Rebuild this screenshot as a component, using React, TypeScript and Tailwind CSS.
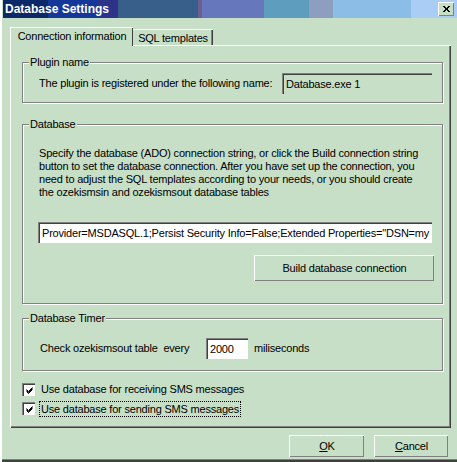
import React from "react";

function Group({ title, className, children }: { title: string; className: string; children: React.ReactNode }) {
  return (
    <fieldset className={"w-[421px] border border-[#808080] shadow-[1px_1px_0_#ffffff,inset_1px_1px_0_#ffffff] " + className}>
      <legend className="ml-[6px] px-[1px] bg-[#c7dfc7] leading-[13px]">{title}</legend>
      {children}
    </fieldset>
  );
}

function Check() {
  return (
    <span className="w-[13px] h-[13px] bg-white border-t border-l border-[#808080] border-r-white border-b-white shadow-[inset_1px_1px_0_#404040] flex items-center justify-center shrink-0">
      <svg width="7" height="7" viewBox="0 0 7 7" className="block">
        <path d="M0.5 2.5 L2.5 4.5 L6.5 0.5 M0.5 3.5 L2.5 5.5 L6.5 1.5 M0.5 4.5 L2.5 6.5 L6.5 2.5" stroke="#000" strokeWidth="1" fill="none" />
      </svg>
    </span>
  );
}

export default function App() {
  return (
    <div className="w-[457px] h-[462px] bg-[#c7dfc7] font-['Liberation_Sans',Arial,sans-serif] text-[11px] tracking-[-0.2px] text-black overflow-hidden flex flex-col pl-[3px] shadow-[inset_2px_0_0_#ffffff,inset_0_-2px_0_#404040,inset_0_-3px_0_#808080]">
      {/* title bar */}
      <div className="h-[18px] flex items-center justify-between pl-[2px] pr-[3px] bg-[linear-gradient(90deg,#0b2868_0px,#0b2868_45px,#14389a_45px,#14389a_94px,#2c3388_94px,#2c3388_115px,#375f89_115px,#375f89_195px,#6a6090_195px,#6a6090_199px,#6677bb_199px,#6677bb_261px,#5f9dbf_261px,#5f9dbf_306px,#8e9ebe_306px,#8e9ebe_330px,#8bbde6_330px,#8bbde6_408px,#aacdf5_408px)]">
        <span className="text-white font-bold text-[12px] tracking-normal leading-[18px]">Database Settings</span>
        <span className="w-[16px] h-[14px] bg-[#c7dfc7] border-t border-l border-white border-r-[#404040] border-b-[#404040] shadow-[inset_-1px_-1px_0_#808080] flex items-center justify-center">
          <svg width="8" height="7" viewBox="0 0 8 7" className="block">
            <path d="M0 0 L6 6 M1 0 L7 6 M6 0 L0 6 M7 0 L1 6" stroke="#000" strokeWidth="1" shapeRendering="crispEdges" />
          </svg>
        </span>
      </div>

      <div className="pt-[9px] pl-[7px]">
        {/* tabs */}
        <div className="flex items-end h-[18px]">
          <div className="relative z-10 w-[123px] h-[19px] -mb-[1px] bg-[#c7dfc7] border-t border-l border-white shadow-[inset_-1px_0_0_#404040] flex items-start justify-center pt-[2px] leading-[13px]">
            Connection information
          </div>
          <div className="w-[80px] h-[16px] border-t border-white shadow-[inset_-1px_0_0_#404040,inset_-2px_0_0_#808080] flex items-start justify-center pt-[2px] leading-[13px]">
            SQL templates
          </div>
        </div>

        {/* panel */}
        <div className="w-[441px] h-[383px] border-t border-l border-white shadow-[inset_-1px_-1px_0_#404040,inset_-2px_-2px_0_#808080] pl-[11px] pt-[10px]">
          <Group title="Plugin name" className="">
            <div className="flex items-center pt-[4px] pb-[8px] pl-[16px] pr-[10px]">
              <span>The plugin is registered under the following name:</span>
              <span className="ml-auto w-[150px] h-[21px] border-t border-l border-[#808080] border-r-white border-b-white shadow-[inset_1px_1px_0_#404040] pl-[3px] flex items-center">
                Database.exe 1
              </span>
            </div>
          </Group>

          <Group title="Database" className="mt-[15px]">
            <div className="pt-[16px] pb-[22px] pl-[16px] pr-[8px] flex flex-col">
              <p className="leading-[13px]">
                Specify the database (ADO) connection string, or click the Build connection string
                <br />
                button to set the database connection. After you have set up the connection, you
                <br />
                need to adjust the SQL templates according to your needs, or you should create
                <br />
                the ozekismsin and ozekismsout database tables
              </p>
              <div className="mt-[23px] -ml-[1px] w-[394px] h-[21px] bg-white border-t border-l border-[#808080] border-r-white border-b-white shadow-[inset_1px_1px_0_#404040] pl-[3px] flex items-center overflow-hidden whitespace-nowrap">
                Provider=MSDASQL.1;Persist Security Info=False;Extended Properties="DSN=my
              </div>
              <button className="mt-[12px] self-end w-[180px] h-[26px] bg-[#c7dfc7] border-t border-l border-white border-r-[#404040] border-b-[#404040] shadow-[inset_-1px_-1px_0_#808080] text-[11px]">
                Build database connection
              </button>
            </div>
          </Group>

          <Group title="Database Timer" className="mt-[8px]">
            <div className="flex items-center pt-[13px] pb-[11px] pl-[17px]">
              <span className="w-[166px] whitespace-pre">Check ozekismsout table  every</span>
              <span className="w-[42px] h-[21px] bg-white border-t border-l border-[#808080] border-r-white border-b-white shadow-[inset_1px_1px_0_#404040] pl-[3px] flex items-center">
                2000
              </span>
              <span className="ml-[6px]">miliseconds</span>
            </div>
          </Group>

          <div className="mt-[12px] flex items-center h-[13px]">
            <Check />
            <span className="ml-[6px]">Use database for receiving SMS messages</span>
          </div>
          <div className="mt-[6px] flex items-center h-[13px]">
            <Check />
            <span className="ml-[4px] px-[1px] border border-dotted border-black leading-[14px]">Use database for sending SMS messages</span>
          </div>
        </div>
      </div>

      {/* buttons */}
      <div className="mt-[7px] flex justify-end gap-[10px] pr-[9px]">
        <button className="w-[75px] h-[22px] bg-[#c7dfc7] border-t border-l border-white border-r-[#404040] border-b-[#404040] shadow-[inset_-1px_-1px_0_#808080] text-[11px]">
          <span className="underline">O</span>K
        </button>
        <button className="w-[74px] h-[22px] bg-[#c7dfc7] border-t border-l border-white border-r-[#404040] border-b-[#404040] shadow-[inset_-1px_-1px_0_#808080] text-[11px]">
          <span className="underline">C</span>ancel
        </button>
      </div>
    </div>
  );
}
